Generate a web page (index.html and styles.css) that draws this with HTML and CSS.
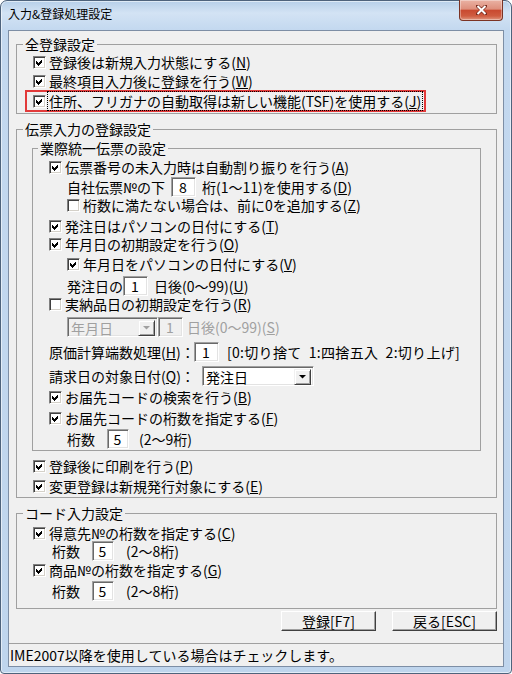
FILE: index.html
```html
<!DOCTYPE html>
<html>
	<head>
		<meta charset="utf-8">
		<title>入力&amp;登録処理設定</title>
		<link rel="stylesheet" href="styles.css">
	</head>
	<body>
	<div class="window">
		<div class="titlebar">
			<span class="title">入力&amp;登録処理設定</span>
			<span class="close">
				<svg width="11" height="10" viewBox="0 0 11 10"><path d="M1.5 1 L9.5 9 M9.5 1 L1.5 9" stroke="#7a2a1c" stroke-width="3.4" stroke-linecap="round"/><path d="M1.5 1 L9.5 9 M9.5 1 L1.5 9" stroke="#fff" stroke-width="2"/></svg>
			</span>
		</div>
		<div class="client">
			<div class="content">

				<fieldset class="group g1">
					<legend>全登録設定</legend>
					<div class="row">
						<span class="cb"><svg viewBox="0 0 11 11"><polygon points="2,4 4,6 8,2 8,5 4,9 2,7"/></svg></span>
						<span class="lbl">登録後は新規入力状態にする(<u>N</u>)</span>
					</div>
					<div class="row sp1">
						<span class="cb"><svg viewBox="0 0 11 11"><polygon points="2,4 4,6 8,2 8,5 4,9 2,7"/></svg></span>
						<span class="lbl">最終項目入力後に登録を行う(<u>W</u>)</span>
					</div>
					<div class="marked">
						<div class="row">
							<span class="cb"><svg viewBox="0 0 11 11"><polygon points="2,4 4,6 8,2 8,5 4,9 2,7"/></svg></span>
							<span class="lbl focus">住所、フリガナの自動取得は新しい機能(TSF)を使用する(<u>J</u>)</span>
						</div>
					</div>
				</fieldset>

				<fieldset class="group g2">
					<legend>伝票入力の登録設定</legend>

					<fieldset class="group inner">
						<legend>業際統一伝票の設定</legend>
						<div class="row">
							<span class="cb"><svg viewBox="0 0 11 11"><polygon points="2,4 4,6 8,2 8,5 4,9 2,7"/></svg></span>
							<span class="lbl">伝票番号の未入力時は自動割り振りを行う(<u>A</u>)</span>
						</div>
						<div class="row sp2 ind">
							<span class="txt w104">自社伝票№の下</span>
							<input class="num" type="text" value="8">
							<span class="txt after">桁(1～11)を使用する(<u>D</u>)</span>
						</div>
						<div class="row ind">
							<span class="cb"></span>
							<span class="lbl">桁数に満たない場合は、前に0を追加する(<u>Z</u>)</span>
						</div>
						<div class="row sp3">
							<span class="cb"><svg viewBox="0 0 11 11"><polygon points="2,4 4,6 8,2 8,5 4,9 2,7"/></svg></span>
							<span class="lbl">発注日はパソコンの日付にする(<u>T</u>)</span>
						</div>
						<div class="row">
							<span class="cb"><svg viewBox="0 0 11 11"><polygon points="2,4 4,6 8,2 8,5 4,9 2,7"/></svg></span>
							<span class="lbl">年月日の初期設定を行う(<u>O</u>)</span>
						</div>
						<div class="row sp2 ind">
							<span class="cb"><svg viewBox="0 0 11 11"><polygon points="2,4 4,6 8,2 8,5 4,9 2,7"/></svg></span>
							<span class="lbl">年月日をパソコンの日付にする(<u>V</u>)</span>
						</div>
						<div class="row sp4 ind">
							<span class="txt w56">発注日の</span>
							<input class="num" type="text" value="1">
							<span class="txt after">日後(0～99)(<u>U</u>)</span>
						</div>
						<div class="row">
							<span class="cb"></span>
							<span class="lbl">実納品日の初期設定を行う(<u>R</u>)</span>
						</div>
						<div class="row sp5 ind">
							<div class="combo off w91">
								<span class="val">年月日</span>
								<span class="drop"><svg width="7" height="4" viewBox="0 0 7 4"><polygon points="0,0 7,0 3.5,3.5"/></svg></span>
							</div>
							<input class="num off gap20" type="text" value="1" disabled>
							<span class="txt after4 grey">日後(0～99)(<u>S</u>)</span>
						</div>
						<div class="row sp7">
							<span class="txt w145">原価計算端数処理(<u>H</u>)：</span>
							<input class="num" type="text" value="1">
							<span class="txt after8 spread">[0:切り捨て&ensp;1:四捨五入&ensp;2:切り上げ]</span>
						</div>
						<div class="row sp6">
							<span class="txt w153">請求日の対象日付(<u>Q</u>)：</span>
							<div class="combo w112">
								<span class="val">発注日</span>
								<span class="drop"><svg width="7" height="4" viewBox="0 0 7 4"><polygon points="0,0 7,0 3.5,3.5"/></svg></span>
							</div>
						</div>
						<div class="row sp3">
							<span class="cb"><svg viewBox="0 0 11 11"><polygon points="2,4 4,6 8,2 8,5 4,9 2,7"/></svg></span>
							<span class="lbl">お届先コードの検索を行う(<u>B</u>)</span>
						</div>
						<div class="row sp3">
							<span class="cb"><svg viewBox="0 0 11 11"><polygon points="2,4 4,6 8,2 8,5 4,9 2,7"/></svg></span>
							<span class="lbl">お届先コードの桁数を指定する(<u>F</u>)</span>
						</div>
						<div class="row sp3 ind">
							<span class="txt w40">桁数</span>
							<input class="num narrow" type="text" value="5">
							<span class="txt after10">(2～9桁)</span>
						</div>
					</fieldset>

					<div class="row sp6">
						<span class="cb"><svg viewBox="0 0 11 11"><polygon points="2,4 4,6 8,2 8,5 4,9 2,7"/></svg></span>
						<span class="lbl">登録後に印刷を行う(<u>P</u>)</span>
					</div>
					<div class="row sp2">
						<span class="cb"><svg viewBox="0 0 11 11"><polygon points="2,4 4,6 8,2 8,5 4,9 2,7"/></svg></span>
						<span class="lbl">変更登録は新規発行対象にする(<u>E</u>)</span>
					</div>
				</fieldset>

				<fieldset class="group g3">
					<legend>コード入力設定</legend>
					<div class="row">
						<span class="cb"><svg viewBox="0 0 11 11"><polygon points="2,4 4,6 8,2 8,5 4,9 2,7"/></svg></span>
						<span class="lbl">得意先№の桁数を指定する(<u>C</u>)</span>
					</div>
					<div class="row ind19">
						<span class="txt w40">桁数</span>
						<input class="num narrow" type="text" value="5">
						<span class="txt after12">(2～8桁)</span>
					</div>
					<div class="row sp1">
						<span class="cb"><svg viewBox="0 0 11 11"><polygon points="2,4 4,6 8,2 8,5 4,9 2,7"/></svg></span>
						<span class="lbl">商品№の桁数を指定する(<u>G</u>)</span>
					</div>
					<div class="row sp3 ind19">
						<span class="txt w40">桁数</span>
						<input class="num narrow" type="text" value="5">
						<span class="txt after12">(2～8桁)</span>
					</div>
				</fieldset>

				<div class="buttons">
					<button class="btn b95" type="button">登録[F7]</button>
					<button class="btn b105" type="button">戻る[ESC]</button>
				</div>
			</div>
			<div class="status">IME2007以降を使用している場合はチェックします。</div>
		</div>
	</div>
	</body>
</html>
```

FILE: styles.css
```css
* {
	box-sizing: border-box;
}
html, body {
	margin: 0;
	padding: 0;
}
body {
	width: 512px;
	height: 674px;
	overflow: hidden;
	background: #fff;
	font-family: "Noto Sans CJK JP", sans-serif;
	font-size: 14px;
	color: #000;
}

/* window frame */
.window {
	width: 512px;
	height: 674px;
	display: flex;
	flex-direction: column;
	padding: 0 7px;
	border: 1px solid #4e637c;
	border-radius: 7px 7px 4px 4px;
	background: linear-gradient(to bottom, #b6cfe9 0px, #d3e3f4 12px, #c3d8ef 29px, #bfd5ed 100%);
	box-shadow: inset 0 0 0 1px rgba(255,255,255,0.55);
}
.titlebar {
	height: 29px;
	display: flex;
	justify-content: space-between;
	align-items: flex-start;
}
.title {
	margin-top: 5px;
	font-size: 12px;
	line-height: 16px;
}
.close {
	width: 44px;
	height: 21px;
	margin-top: -1px;
	margin-right: 1px;
	display: flex;
	align-items: center;
	justify-content: center;
	border: 1px solid #7b3324;
	border-top: 0;
	border-radius: 0 0 4px 4px;
	background: linear-gradient(to bottom, #eab2a4 0%, #de8f7c 45%, #c94a30 52%, #cf5c40 80%, #e0977f 100%);
	box-shadow: inset 0 0 0 1px rgba(255,255,255,0.35);
}

/* client area */
.client {
	height: 637px;
	flex: none;
	display: flex;
	flex-direction: column;
	background: #f0f0f0;
	border: 1px solid #7d8ea5;
}
.content {
	padding: 6px 6px 0 7px;
}

/* group boxes */
.group {
	margin: 0;
	min-width: 0;
	border: 1px solid #a0a0a0;
	padding: 0 15px 1px 16px;
}
.group legend {
	margin-left: -10px;
	padding: 0 2px;
	height: 14px;
	line-height: 14px;
}
.g1 {
	padding-top: 2px;
	padding-bottom: 1px;
}
.g2 {
	margin-top: 8px;
	padding-bottom: 2px;
}
.inner {
	margin-top: 5px;
	margin-left: -1px;
	padding: 3px 15px 2px 16px;
}
.inner legend {
	margin-left: -11px;
}
.g3 {
	margin-top: 8px;
	padding-top: 4px;
	padding-bottom: 8px;
}

/* rows */
.row {
	display: flex;
	align-items: center;
	height: 18px;
	line-height: 18px;
	white-space: nowrap;
}
.sp1 { margin-top: 1px; }
.sp2 { margin-top: 2px; }
.sp3 { margin-top: 3px; }
.sp4 { margin-top: 4px; }
.sp5 { margin-top: 5px; }
.sp6 { margin-top: 6px; }
.sp7 { margin-top: 7px; }
.ind { padding-left: 18px; }
.ind19 { padding-left: 19px; }

.marked {
	width: fit-content;
	margin-left: -8px;
	padding: 0 2px 0 6px;
	border: 2px solid #e23a3a;
}

.cb {
	width: 13px;
	height: 13px;
	flex: none;
	margin-right: 2px;
	background: #fff;
	border: 1px solid;
	border-color: #808080 #fff #fff #808080;
	box-shadow: inset 1px 1px 0 #404040, inset -1px -1px 0 #d4d0c8;
}
.cb svg {
	display: block;
	width: 11px;
	height: 11px;
	shape-rendering: crispEdges;
}
.lbl {
	padding: 0 1px;
}
.focus {
	outline: 1px dotted #000;
}
.txt {
	flex: none;
}
.spread {
	letter-spacing: 0.3px;
}
.grey {
	color: #a0a0a0;
}
.w40 { width: 40px; }
.w56 { width: 56px; }
.w104 { width: 104px; }
.w145 { width: 145px; }
.w153 { width: 153px; }
.after { margin-left: 6px; }
.after4 { margin-left: 4px; }
.after8 { margin-left: 8px; }
.after10 { margin-left: 10px; }
.after12 { margin-left: 12px; }
.gap20 { margin-left: 20px; }

/* edit boxes */
.num {
	width: 25px;
	height: 20px;
	flex: none;
	margin: 0;
	padding: 0 1px 0 0;
	background: #fff;
	border: 1px solid;
	border-color: #a0a0a0 #fff #fff #a0a0a0;
	box-shadow: inset 1px 1px 0 #696969, inset -1px -1px 0 #e3e3e3;
	font-family: "Noto Sans CJK JP", sans-serif;
	font-size: 14px;
	line-height: 18px;
	color: #000;
	text-align: center;
	outline: none;
}
.num.narrow {
	width: 22px;
}
.num.off {
	background: #f0f0f0;
	color: #a0a0a0;
	-webkit-text-fill-color: #a0a0a0;
}

/* combo boxes */
.combo {
	height: 20px;
	flex: none;
	display: flex;
	padding: 2px;
	background: #fff;
	border: 1px solid;
	border-color: #a0a0a0 #fff #fff #a0a0a0;
	box-shadow: inset 1px 1px 0 #696969, inset -1px -1px 0 #e3e3e3;
}
.w91 { width: 91px; }
.w112 { width: 112px; }
.combo .val {
	flex: 1;
	padding-left: 1px;
	line-height: 16px;
}
.combo .drop {
	width: 17px;
	height: 16px;
	display: flex;
	align-items: center;
	justify-content: center;
	background: #f0f0f0;
	border: 1px solid;
	border-color: #f0f0f0 #404040 #404040 #f0f0f0;
	box-shadow: inset 1px 1px 0 #fff, inset -1px -1px 0 #a0a0a0;
}
.combo.off {
	background: #f0f0f0;
}
.combo.off .val {
	color: #a0a0a0;
}
.combo.off polygon {
	fill: #a0a0a0;
}

/* buttons */
.buttons {
	display: flex;
	justify-content: flex-end;
	gap: 16px;
	margin-top: 2px;
}
.btn {
	height: 20px;
	padding: 0;
	background: #f0f0f0;
	border: 1px solid;
	border-color: #fff #404040 #404040 #fff;
	box-shadow: inset -1px -1px 0 #a0a0a0;
	font-family: "Noto Sans CJK JP", sans-serif;
	font-size: 14px;
	line-height: 18px;
	color: #000;
	text-align: center;
}
.b95 { width: 95px; }
.b105 { width: 105px; }

/* status bar */
.status {
	margin-top: auto;
	height: 23px;
	padding-left: 1px;
	border-top: 1px solid #a0a0a0;
	line-height: 22px;
	white-space: nowrap;
}
```
